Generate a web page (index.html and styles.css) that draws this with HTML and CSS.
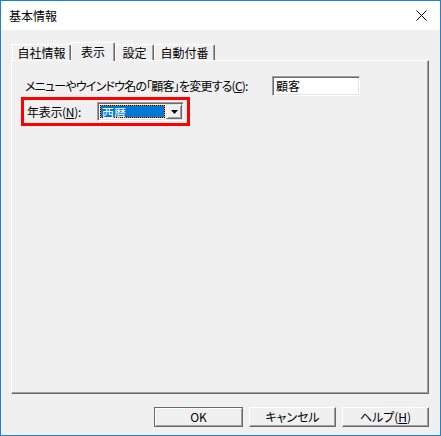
FILE: index.html
```html
<!DOCTYPE html>
<html lang="ja">
<head>
<meta charset="utf-8">
<title>基本情報</title>
<link rel="stylesheet" href="styles.css">
</head>
<body>
<div class="window">
  <div class="titlebar">
    <span class="title">基本情報</span>
    <svg class="close" width="11" height="11" viewBox="0 0 11 11"><path d="M0.5 0.5 L10.5 10.5 M10.5 0.5 L0.5 10.5" stroke="#000" stroke-width="1" fill="none"/></svg>
  </div>
  <div class="body">
    <div class="tabs">
      <div class="tab t1">自社情報</div>
      <div class="tab active t2">表示</div>
      <div class="tab t3">設定</div>
      <div class="tab t4">自動付番</div>
    </div>
    <div class="panel">
      <div class="row">
        <span class="label label-long">メニューやウインドウ名の「顧客」を変更する(<u>C</u>):</span>
        <div class="textbox">顧客</div>
      </div>
      <div class="mark">
        <span class="label label-short">年表示(<u>N</u>):</span>
        <div class="combo">
          <div class="combo-value"><span class="sel">西暦</span></div>
          <div class="combo-btn"><svg width="7" height="4" viewBox="0 0 7 4"><path d="M0 0 H7 L3.5 4 Z" fill="#000"/></svg></div>
        </div>
      </div>
    </div>
    <div class="buttons">
      <div class="btn default">OK</div>
      <div class="btn">キャンセル</div>
      <div class="btn">ヘルプ(<u>H</u>)</div>
    </div>
  </div>
</div>
</body>
</html>
```

FILE: styles.css
```css
* { box-sizing: border-box; }
html, body { margin: 0; padding: 0; background: #fff; }
body {
  font-family: "Noto Sans CJK JP", "Noto Sans", sans-serif;
  font-size: 12px;
  line-height: 14px;
  color: #000;
  font-feature-settings: "palt";
}
u { text-decoration: underline; text-underline-offset: 1px; }
.window {
  width: 441px;
  height: 436px;
  border: 1px solid #1883d7;
  background: #f0f0f0;
  display: flex;
  flex-direction: column;
}
.titlebar {
  height: 29px;
  background: #fff;
  display: flex;
  align-items: center;
  justify-content: space-between;
  padding: 0 13px 0 8px;
}
.title { font-size: 12px; }
.close { display: block; }
.body {
  flex: 1;
  display: flex;
  flex-direction: column;
  padding: 12px 11px 0 10px;
}
.tabs {
  display: flex;
  align-items: flex-end;
  height: 18px;
  padding-left: 1px;
  position: relative;
  z-index: 1;
}
.tab {
  height: 16px;
  border-top: 1px solid #fff;
  border-left: 1px solid #fff;
  border-right: 1px solid #696969;
  box-shadow: inset -1px 0 #a0a0a0;
  border-radius: 2px 2px 0 0;
  display: flex;
  align-items: center;
  justify-content: center;
  padding-top: 1px;
  background: #f0f0f0;
}
.t1 { width: 59px; }
.t2 { width: 44px; }
.t3 { width: 39px; }
.t4 { width: 61px; }
.tab.active {
  height: 19px;
  margin-bottom: -1px;
  padding-bottom: 2px;
}
.panel {
  width: 418px;
  height: 334px;
  border-top: 1px solid #fff;
  border-left: 1px solid #fff;
  border-right: 1px solid #696969;
  border-bottom: 1px solid #696969;
  box-shadow: inset -1px -1px #a0a0a0;
  padding-top: 15px;
}
.row {
  display: flex;
  align-items: center;
  height: 20px;
  padding-left: 13px;
}
.label-long { width: 247px; white-space: nowrap; letter-spacing: -0.8px; }
.textbox {
  width: 88px;
  height: 20px;
  background: #fff;
  border-top: 1px solid #a0a0a0;
  border-left: 1px solid #a0a0a0;
  border-right: 1px solid #fff;
  border-bottom: 1px solid #fff;
  box-shadow: inset 1px 1px #696969, inset -1px -1px #e3e3e3;
  padding: 2px 0 0 3px;
  line-height: 14px;
}
.mark {
  margin: 1px 0 0 9px;
  width: 169px;
  height: 29px;
  border: 3px solid #ff0000;
  display: flex;
  align-items: center;
  padding-left: 3px;
}
.label-short { width: 70px; white-space: nowrap; letter-spacing: -0.3px; }
.combo {
  width: 87px;
  height: 19px;
  background: #fff;
  border-top: 1px solid #a0a0a0;
  border-left: 1px solid #a0a0a0;
  border-right: 1px solid #fff;
  border-bottom: 1px solid #fff;
  box-shadow: inset 1px 1px #696969, inset -1px -1px #e3e3e3;
  display: flex;
  padding: 1px 1px 1px 2px;
}
.combo-value {
  flex: 1;
  padding: 1px 1px 1px 0;
  display: flex;
}
.sel {
  flex: 1;
  border: 1px dotted #000;
  background: linear-gradient(#0078d7, #0078d7) padding-box, linear-gradient(#ff8828, #ff8828) border-box;
  color: #fff;
  line-height: 13px;
  padding-left: 1px;
}
.combo-btn {
  width: 16px;
  background: #f0f0f0;
  border-top: 1px solid #e3e3e3;
  border-left: 1px solid #e3e3e3;
  border-right: 1px solid #696969;
  border-bottom: 1px solid #696969;
  box-shadow: inset 1px 1px #fff, inset -1px -1px #a0a0a0;
  display: flex;
  align-items: center;
  justify-content: center;
}
.combo-btn svg { display: block; }
.buttons {
  display: flex;
  justify-content: flex-end;
  gap: 6px;
  margin-top: 13px;
  width: 418px;
}
.btn {
  width: 87px;
  height: 20px;
  background: #f0f0f0;
  border-top: 1px solid #fff;
  border-left: 1px solid #fff;
  border-right: 1px solid #696969;
  border-bottom: 1px solid #696969;
  box-shadow: inset -1px -1px #a0a0a0;
  display: flex;
  align-items: center;
  justify-content: center;
}
.btn.default {
  width: 89px;
  border: 1px solid #696969;
  box-shadow: inset 1px 1px #fff, inset -1px -1px #a0a0a0;
}
```
